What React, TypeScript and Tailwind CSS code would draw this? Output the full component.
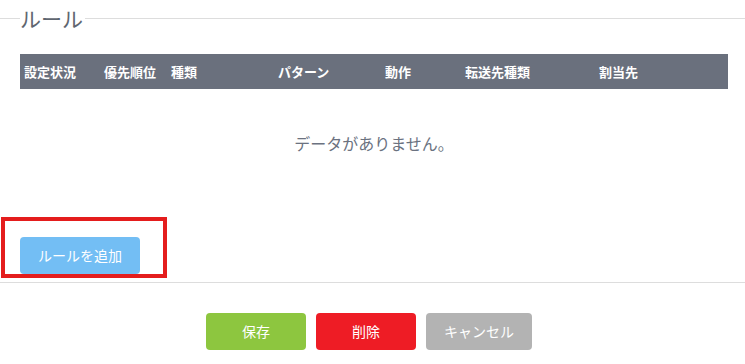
import React from "react";

const columns = [
  { label: "設定状況", w: "w-[80px]" },
  { label: "優先順位", w: "w-[67px]" },
  { label: "種類", w: "w-[107px]" },
  { label: "パターン", w: "w-[107px]" },
  { label: "動作", w: "w-[80px]" },
  { label: "転送先種類", w: "w-[134px]" },
  { label: "割当先", w: "flex-1" },
];

export default function App() {
  return (
    <div className="w-[745px] h-[364px] bg-white font-['Noto_Sans_CJK_JP','Noto_Sans',sans-serif] overflow-hidden">
      {/* legend */}
      <div className="flex items-center h-9">
        <div className="w-5 h-px bg-[#dddddd]" />
        <span className="text-[21px] leading-9 text-[#5f6670] pr-0.5">ルール</span>
        <div className="flex-1 h-px bg-[#dddddd]" />
      </div>

      <div className="pl-5 pr-[17px]">
        <div className="mt-[18px] h-[35px] bg-[#6a707d] flex items-center pl-1 text-white text-[13px] font-bold">
          {columns.map((c) => (
            <div key={c.label} className={c.w}>
              {c.label}
            </div>
          ))}
        </div>

        <div className="h-[108px] flex items-center justify-center text-[16px] text-[#6b7280]">
          データがありません。
        </div>

        <div className="relative mt-10 w-[120px]">
          <button className="w-[120px] h-[37px] rounded bg-[#73bef4] text-white text-[14px]">
            ルールを追加
          </button>
          <div className="absolute left-[-19px] top-[-20px] w-[166px] h-[61px] border-4 border-[#e41d1d] pointer-events-none" />
        </div>
      </div>

      <div className="mt-2 h-px bg-[#dddddd]" />

      <div className="pt-[30px] flex justify-center gap-2.5 pr-[7px]">
        <button className="w-[100px] h-[37px] rounded bg-[#8dc63f] text-white text-[14px]">保存</button>
        <button className="w-[100px] h-[37px] rounded bg-[#ee1c25] text-white text-[14px]">削除</button>
        <button className="w-[106px] h-[37px] rounded bg-[#b3b3b3] text-white text-[14px]">キャンセル</button>
      </div>
    </div>
  );
}
